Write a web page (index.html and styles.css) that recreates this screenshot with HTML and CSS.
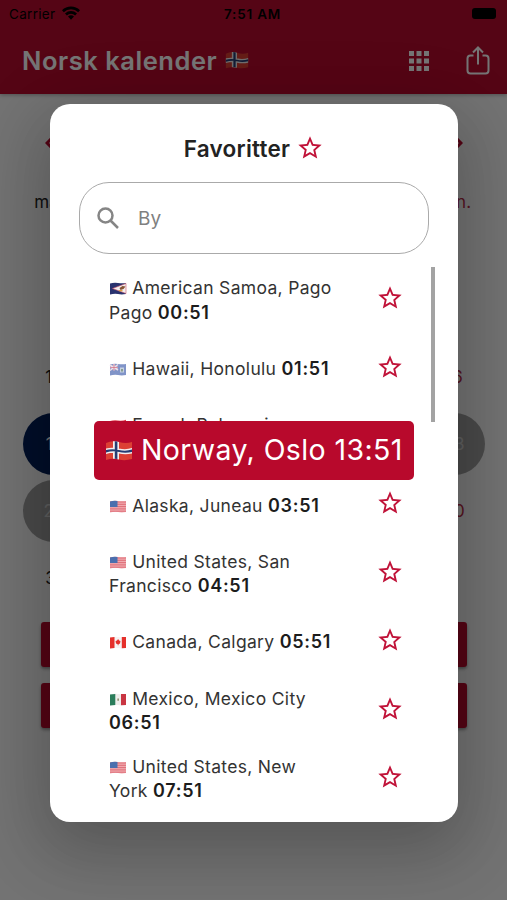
FILE: index.html
```html
<!DOCTYPE html>
<html lang="no">
<head>
<meta charset="utf-8">
<title>Norsk kalender</title>
<link rel="stylesheet" href="styles.css">
</head>
<body>
<svg class="defs" aria-hidden="true">
  <symbol id="star" viewBox="0 0 24 24"><path d="M22 9.24l-7.19-.62L12 2 9.19 8.63 2 9.24l5.46 4.73L5.82 21 12 17.27 18.18 21l-1.63-7.03L22 9.24zM12 15.4l-3.76 2.27 1-4.28-3.32-2.88 4.38-.38L12 6.1l1.71 4.04 4.38.38-3.32 2.88 1 4.28L12 15.4z"/></symbol>
  <symbol id="norway" viewBox="0 0 28 22"><path fill="#dc4034" d="M1 3Q7 0 14 2T27 2V19Q20 21 14 19.500T1 20z"/><path fill="#f4eeee" d="M8 1.200Q11 1 14 2V19.500Q11 18.500 8 18.800zM1 8.500Q7 7 14 8.500T27 8V13.500Q20 15 14 13.500T1 14z"/><path fill="#263d73" d="M9.800 1.200l2.600.400v17.400l-2.600-.3zM1 10Q7 8.500 14 10T27 9.500V12Q20 13.500 14 12T1 12.500z"/></symbol>
  <symbol id="usa" viewBox="0 0 17 13"><path fill="#f0a9ae" d="M.5 1.500Q4 .5 8.500 1T16.500 1V12Q12 12.800 8.500 12T.5 12.500z"/><path stroke="#dd6570" stroke-width=".9" d="M.5 2h16M.5 4.300h16M.5 6.600h16M.5 8.900h16M.5 11.200h16"/><path fill="#4b6fae" d="M.5 1.500Q4 .5 8 1V7H.5z"/></symbol>
  <symbol id="samoa" viewBox="0 0 17 13"><path fill="#29326e" d="M.5 1.500Q4 .5 8.500 1T16.500 1V12Q12 12.800 8.500 12T.5 12.500z"/><path fill="#f3eeee" stroke="#cf5668" stroke-width=".6" d="M16.500 1.500L3 6.500l13.500 5z"/><path fill="#875434" d="M10 6l3-2 3 .5-2 2.500-3 1z"/><path fill="#dca340" d="M9 8l4 0v1.300H10z"/></symbol>
  <symbol id="hawaii" viewBox="0 0 17 13"><path fill="#8094c8" d="M.5 1.500Q4 .5 8.500 1T16.500 1V12Q12 12.800 8.500 12T.5 12.500z"/><path stroke="#efdfe7" stroke-width="1.500" d="M.5 2l8 5M8.500 1.500l-8 6M4.500 1v6.500M.5 4.500h8"/><path stroke="#cf6d82" stroke-width=".7" d="M4.500 1v6.500M.5 4.500h8"/><path fill="#c7d1e0" d="M10.500 4.500h4v5h-4z"/><path fill="#849c91" d="M11.500 6h2v2.500h-2z"/></symbol>
  <symbol id="polynesia" viewBox="0 0 17 13"><path fill="#dc3f4b" d="M.5 2Q4 1 8.500 1.500T16.500 .8V12H.5z"/><path fill="#fff" d="M.5 4.500h16v5H.5z"/></symbol>
  <symbol id="canada" viewBox="0 0 17 13"><path fill="#f6f3f3" d="M.5 1.500Q4 .5 8.500 1T16.500 1V12Q12 12.800 8.500 12T.5 12.500z"/><path fill="#e5302b" d="M.5 1.500L5 1v11L.5 12.500zM12.300 1l4.200 0v11l-4.200.2zM8.600 3l1 1.500 1.400.5-.5 2.500-1.500.7v1h-.8v-1l-1.700-.7L6 5l1.500-.5z"/></symbol>
  <symbol id="mexico" viewBox="0 0 17 13"><path fill="#efeeec" d="M.5 1.500Q4 .5 8.500 1T16.500 1V12Q12 12.800 8.500 12T.5 12.500z"/><path fill="#2b7d5b" d="M.5 1.500L5.800 1v11L.5 12.500z"/><path fill="#c93642" d="M11.500 1l5 0v11l-5 .2z"/><path fill="#8b8866" d="M7.900 5.500h1.500v2.200H7.900z"/></symbol>
</svg>

<div class="app">
  <header class="top">
    <div class="status">
      <span class="carrier">Carrier
        <svg class="wifi" viewBox="0 0 18 14"><path d="M0 4.200a13 13 0 0 1 18 0L16.200 6.200a10.400 10.400 0 0 0-14.400 0zM3 7.400a8.800 8.800 0 0 1 12 0l-1.900 2a6 6 0 0 0-8.200 0zM6 10.600a4.400 4.400 0 0 1 6 0L9 13.800z"/></svg>
      </span>
      <span class="clock">7:51 AM</span>
      <span class="power"><i class="battery"></i></span>
    </div>
    <div class="bar">
      <h1>Norsk kalender</h1>
      <svg class="bar-flag"><use href="#norway"/></svg>
      <svg class="apps" viewBox="0 0 20 20"><path d="M0 0h5v5H0zM7.500 0h5v5h-5zM15 0h5v5h-5zM0 7.500h5v5H0zM7.500 7.500h5v5h-5zM15 7.500h5v5h-5zM0 15h5v5H0zM7.500 15h5v5h-5zM15 15h5v5h-5z"/></svg>
      <svg class="share" viewBox="0 0 24 29"><path d="M7.500 9.500H4.500a3 3 0 0 0-3 3v12a3 3 0 0 0 3 3h15a3 3 0 0 0 3-3v-12a3 3 0 0 0-3-3h-3M12 18.500V2M7 6.500L12 1.500l5 5"/></svg>
    </div>
  </header>
  <main class="calendar">
    <div class="months">
      <svg viewBox="0 0 8 12"><path d="M7 1L2 6l5 5"/></svg>
      <svg viewBox="0 0 8 12"><path d="M1 1l5 5-5 5"/></svg>
    </div>
    <div class="week names"><span>man.</span><span class="holiday">søn.</span></div>
    <div class="week"><span>10</span><span class="holiday">16</span></div>
    <div class="week"><span class="today">17</span><span class="marked">23</span></div>
    <div class="week"><span class="marked">24</span><span class="holiday">30</span></div>
    <div class="week"><span>31</span></div>
    <div class="actions"><div class="action"></div><div class="action"></div></div>
  </main>
</div>

<div class="scrim">
  <section class="dialog">
    <h2>Favoritter <svg class="star"><use href="#star"/></svg></h2>
    <div class="search">
      <svg viewBox="0 0 22 22"><path d="M14 14l7 7M15.500 8.500a7 7 0 1 1-14 0a7 7 0 0 1 14 0z"/></svg>
      <span>By</span>
    </div>
    <div class="list">
      <div class="row"><p><svg class="flag"><use href="#samoa"/></svg> American Samoa, Pago Pago <b>00:51</b></p><svg class="star"><use href="#star"/></svg></div>
      <div class="row"><p><svg class="flag"><use href="#hawaii"/></svg> Hawaii, Honolulu <b>01:51</b></p><svg class="star"><use href="#star"/></svg></div>
      <div class="row"><p><svg class="flag"><use href="#polynesia"/></svg> French Polynesia,<br>&nbsp;</p><svg class="star"><use href="#star"/></svg></div>
      <div class="row"><p><svg class="flag"><use href="#usa"/></svg> Alaska, Juneau <b>03:51</b></p><svg class="star"><use href="#star"/></svg></div>
      <div class="row"><p><svg class="flag"><use href="#usa"/></svg> United States, San Francisco <b>04:51</b></p><svg class="star"><use href="#star"/></svg></div>
      <div class="row"><p><svg class="flag"><use href="#canada"/></svg> Canada, Calgary <b>05:51</b></p><svg class="star"><use href="#star"/></svg></div>
      <div class="row"><p><svg class="flag"><use href="#mexico"/></svg> Mexico, Mexico City <b>06:51</b></p><svg class="star"><use href="#star"/></svg></div>
      <div class="row"><p><svg class="flag"><use href="#usa"/></svg> United States, New York <b>07:51</b></p><svg class="star"><use href="#star"/></svg></div>
      <i class="thumb"></i>
    </div>
    <div class="selected"><svg><use href="#norway"/></svg><span>Norway, Oslo 13:51</span></div>
  </section>
</div>
</body>
</html>
```
FILE: styles.css
```css
* { box-sizing: border-box; }
body {
  margin: 0;
  width: 507px;
  height: 900px;
  overflow: hidden;
  position: relative;
  font-family: Inter, "Liberation Sans", sans-serif;
  color: #222;
}
h1, h2, p { margin: 0; }
svg { display: block; flex: none; }
.defs { position: absolute; width: 0; height: 0; }

.app { height: 900px; background: #fafafa; }
.top { height: 94px; background: #ba0c2f; box-shadow: 0 1px 4px rgba(0, 0, 0, .3); }
.status {
  height: 27px;
  padding: 0 11px 0 9px;
  display: grid;
  grid-template-columns: 1fr auto 1fr;
  align-items: center;
  font-size: 13.500px;
  color: #000;
}
.carrier { display: flex; align-items: center; gap: 7px; letter-spacing: .3px; }
.wifi { width: 18px; height: 14px; margin-bottom: 2px; }
.clock { font-weight: 600; letter-spacing: .8px; }
.power { display: flex; justify-content: flex-end; }
.battery { width: 24px; height: 11px; border-radius: 3px; background: #000; }
.bar { height: 67px; display: flex; align-items: center; padding: 0 17px 0 22px; }
.bar h1 { font-size: 25.500px; font-weight: 600; letter-spacing: .55px; color: #fff; width: 203px; white-space: nowrap; }
.bar-flag { width: 24px; height: 19px; }
.apps { width: 20px; height: 20px; fill: #fff; margin-left: auto; }
.share { width: 24px; height: 29px; fill: none; stroke: #fff; stroke-width: 2; margin-left: 37px; }

.calendar { padding: 43px 20px 0 21px; font-size: 17px; }
.months { display: flex; justify-content: space-between; padding: 0 24px; height: 32px; }
.months svg { width: 8px; height: 12px; fill: none; stroke: #ba0c2f; stroke-width: 3; }
.week { display: flex; justify-content: space-between; height: 66.900px; align-items: center; }
.week span { width: 66px; height: 62px; display: flex; align-items: center; justify-content: center; }
.names { margin-bottom: 108px; }
.holiday { color: #ba2c47; }
.week .today, .week .marked { width: 62px; margin: 0 2px; border-radius: 50%; color: #fff; background: #00205b; }
.week .marked { background: #a2a2a2; color: #d0d0d0; }
.actions { display: grid; gap: 16px; margin: 11px 20px 0 20px; }
.action { height: 45px; border-radius: 3px; background: #ba0c2f; box-shadow: 0 2px 3px rgba(0, 0, 0, .35); }

.scrim { position: absolute; inset: 0; padding: 104px 49px 0 50px; background: rgba(0, 0, 0, .54); }
.dialog {
  position: relative;
  height: 718px;
  padding: 28px 29px 0;
  border-radius: 20px;
  background: #fff;
  box-shadow: 0 24px 60px 6px rgba(0, 0, 0, .16), 0 18px 80px 12px rgba(0, 0, 0, .1);
}
h2 {
  height: 32px;
  margin-bottom: 18px;
  display: flex;
  align-items: center;
  justify-content: center;
  gap: 6px;
  font-size: 22.500px;
  font-weight: 600;
  letter-spacing: .25px;
}
.star { width: 28px; height: 28px; fill: #c01238; }
.search {
  height: 72px;
  padding: 0 17px;
  display: flex;
  align-items: center;
  gap: 19px;
  border: 1px solid #aaa;
  border-radius: 30px;
  font-size: 19px;
  color: #808080;
}
.search svg { width: 22px; height: 22px; fill: none; stroke: #858585; stroke-width: 2.500; }
.list { position: relative; padding: 12px 25.500px 0 30px; }
.row { height: 68.400px; display: flex; align-items: center; justify-content: space-between; }
.row p { width: 226px; padding-top: 1px; font-size: 17.500px; line-height: 24.400px; letter-spacing: .32px; color: #333; }
.row b { font-weight: 600; color: #1c1c1c; font-size: 18px; letter-spacing: .7px; line-height: 1; }
.row .star { margin-bottom: 4px; }
.flag { display: inline-block; width: 18px; height: 13px; vertical-align: -1px; }
.thumb { position: absolute; right: -6px; top: 13px; width: 4px; height: 155px; background: #a3a3a3; }
.selected {
  position: absolute;
  left: 44px;
  top: 317px;
  width: 320px;
  height: 59px;
  padding-left: 11px;
  display: flex;
  align-items: center;
  gap: 8px;
  border-radius: 5px;
  background: #b8092c;
  color: #fff;
  font-size: 28.500px;
  letter-spacing: .4px;
  white-space: nowrap;
}
.selected svg { width: 28px; height: 22px; }
.selected span { margin-top: -2px; }
```
